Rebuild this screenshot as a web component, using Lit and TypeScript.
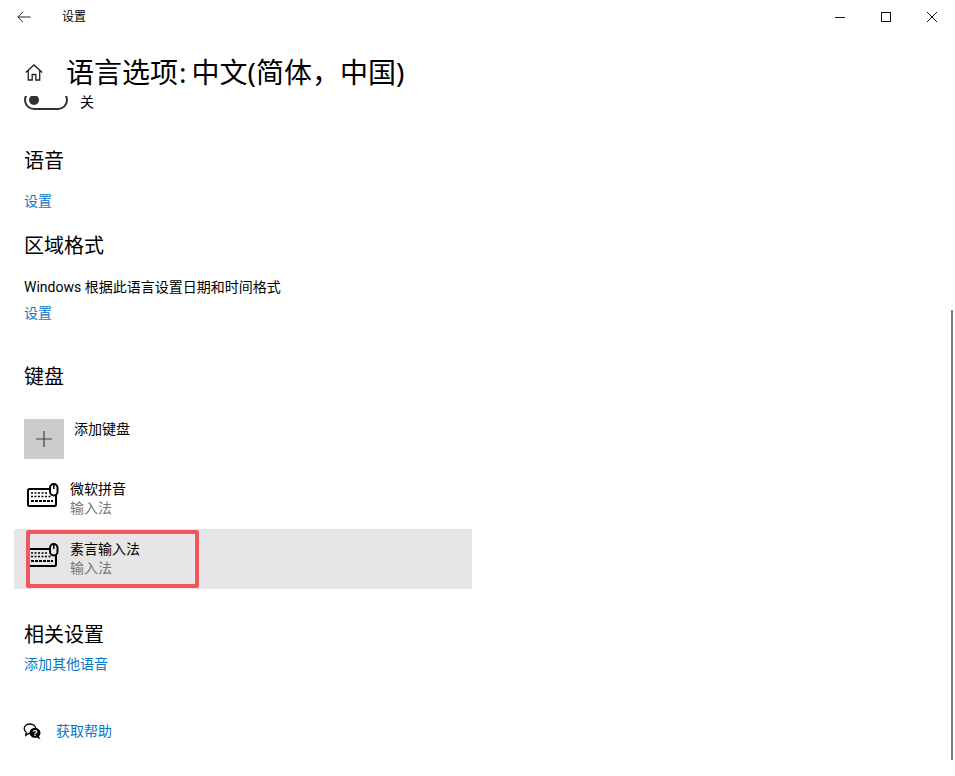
import { LitElement, html, css, svg } from "lit";
import { customElement } from "lit/decorators.js";

const keyboard = svg`<svg class="kbd" width="33" height="26" viewBox="0 0 33 26" fill="none" stroke="#000">
  <path d="M24 7H3.500A1.500 1.500 0 0 0 2 8.500v14A1.500 1.500 0 0 0 3.500 24h25a1.500 1.500 0 0 0 1.500-1.500V13" stroke-width="2"/>
  <rect x="24" y="2" width="7.500" height="11.500" rx="3.700" stroke-width="2"/>
  <path d="M27.800 3v4" stroke-width="1.500"/>
  <path d="M5 11h17M5 14.500h21" stroke-width="1.500" stroke-dasharray="2 1.500"/>
  <path d="M5 19h22" stroke-width="2" stroke-dasharray="3 1"/>
</svg>`;

@customElement("app-root")
export class AppRoot extends LitElement {
  static styles = css`
    :host {
      display: block;
      position: relative;
      width: 955px;
      height: 776px;
      overflow: hidden;
      background: #fff;
      color: #000;
      font-family: "Noto Sans", "Noto Sans CJK SC", sans-serif;
      font-size: 14px;
      line-height: 20px;
    }
    .titlebar { display: flex; align-items: center; height: 33px; }
    .back { display: flex; justify-content: center; width: 48px; }
    .apptitle { margin-left: 14px; font-size: 12px; }
    .winbtns { display: flex; margin-left: auto; }
    .winbtn { display: flex; justify-content: center; align-items: center; width: 46px; height: 33px; }
    .header { box-sizing: border-box; display: flex; align-items: center; height: 63px; padding: 15px 0 0 25px; gap: 23px; }
    .header h1 { margin: 0; font-size: 28px; font-weight: 400; line-height: 40px; white-space: nowrap; }
    .colon { margin: 0 5px 0 1px; }
    .toggle-row { display: flex; height: 14px; padding-left: 24px; gap: 12px; }
    .toggle-wrap { flex: none; display: flex; align-items: flex-end; height: 14px; width: 44px; overflow: hidden; }
    .toggle { flex: none; box-sizing: border-box; width: 44px; height: 20px; border: 2px solid #333; border-radius: 10px; padding: 3px; display: flex; }
    .knob { width: 10px; height: 10px; border-radius: 50%; background: #333; }
    .toggle-label { line-height: 12px; }
    .section { padding-left: 24px; }
    h2 { margin: 0; font-size: 20px; font-weight: 400; line-height: 28px; }
    a { display: block; color: #0a78c8; text-decoration: none; line-height: 20px; }
    .voice { margin-top: 37px; }
    .voice a { margin-top: 16px; }
    .region { margin-top: 21px; }
    .region p { margin: 17px 0 0; line-height: 20px; font-family: Roboto, "Noto Sans CJK SC", sans-serif; }
    .region a { margin-top: 6px; }
    .keys { margin-top: 40px; }
    .add { display: flex; margin-top: 28px; padding-left: 24px; }
    .tile { display: flex; justify-content: center; align-items: center; width: 40px; height: 40px; background: #ccc; }
    .add span { margin-left: 10px; line-height: 20px; }
    .ime { display: flex; box-sizing: border-box; width: 458px; height: 60px; margin-left: 14px; padding: 10px 0 0 12px; }
    .ime.first { margin-top: 10px; }
    .ime.sel { background: #e6e6e6; }
    .kbd { margin-top: 3px; flex: none; }
    .ime .txt { margin-left: 11px; }
    .ime .name { line-height: 19px; }
    .ime .sub { line-height: 20px; color: #767676; }
    .related { margin-top: 32px; }
    .related a { margin-top: 5px; }
    .help { display: flex; align-items: center; margin-top: 47px; padding-left: 23px; gap: 14px; }
    .mark {
      position: absolute; left: 26px; top: 530px; width: 173px; height: 58px;
      box-sizing: border-box; border: 4px solid #f0575c; border-radius: 2px;
    }
    .scroll { position: absolute; left: 951px; top: 310px; width: 2px; height: 450px; background: #7a7a7a; }
  `;

  render() {
    return html`
      <div class="titlebar">
        <div class="back">
          <svg width="14" height="12" viewBox="0 0 14 12" fill="none" stroke="#222" stroke-width="1"><path d="M13.500 6H1M6 .8 .8 6 6 11.200"/></svg>
        </div>
        <div class="apptitle">设置</div>
        <div class="winbtns">
          <div class="winbtn"><svg width="10" height="10" viewBox="0 0 10 10" stroke="#111"><path d="M0 5.500h10"/></svg></div>
          <div class="winbtn"><svg width="10" height="10" viewBox="0 0 10 10" fill="none" stroke="#111"><rect x=".5" y=".5" width="9" height="9"/></svg></div>
          <div class="winbtn"><svg width="10" height="10" viewBox="0 0 10 10" stroke="#111"><path d="M0 0l10 10M10 0 0 10"/></svg></div>
        </div>
      </div>
      <div class="header">
        <svg width="18" height="17" viewBox="0 0 18 17" fill="none" stroke="#222" stroke-width="1.300"><path d="M.8 8.600 9 1l8.200 7.600M3.300 6.500V16h3.900v-5.500h3.600V16h3.900V6.500"/></svg>
        <h1>语言选项<span class="colon">:</span>中文(简体，中国)</h1>
      </div>
      <div class="toggle-row">
        <div class="toggle-wrap"><div class="toggle"><div class="knob"></div></div></div>
        <span class="toggle-label">关</span>
      </div>
      <div class="section voice"><h2>语音</h2><a>设置</a></div>
      <div class="section region">
        <h2>区域格式</h2>
        <p>Windows 根据此语言设置日期和时间格式</p>
        <a>设置</a>
      </div>
      <div class="section keys"><h2>键盘</h2></div>
      <div class="add">
        <div class="tile"><svg width="16" height="16" viewBox="0 0 16 16" stroke="#444" stroke-width="1.200"><path d="M8 0v16M0 8h16"/></svg></div>
        <span>添加键盘</span>
      </div>
      <div class="ime first">${keyboard}<div class="txt"><div class="name">微软拼音</div><div class="sub">输入法</div></div></div>
      <div class="ime sel">${keyboard}<div class="txt"><div class="name">素言输入法</div><div class="sub">输入法</div></div></div>
      <div class="section related"><h2>相关设置</h2><a>添加其他语音</a></div>
      <div class="help">
        <svg width="19" height="17" viewBox="0 0 19 17">
          <path d="M7 1c3.200 0 5.700 2 5.700 4.800s-2.500 4.800-5.700 4.800c-.6 0-1.100 0-1.600-.2L2.800 12.300l.4-3A4.600 4.600 0 0 1 1.200 5.800C1.200 3 3.800 1 7 1z" fill="#fff" stroke="#000" stroke-width="1.300"/>
          <path d="M12 5c3 0 5.500 2.100 5.500 4.800 0 1.400-.6 2.600-1.600 3.500l1.600 3.200-3.600-2a6.500 6.500 0 0 1-1.900.3c-3 0-5.400-2.100-5.400-5S9 5 12 5z" fill="#000"/>
          <text x="12" y="13" font-size="8.500" font-weight="700" text-anchor="middle" fill="#fff" font-family="Liberation Sans">?</text>
        </svg>
        <a>获取帮助</a>
      </div>
      <div class="mark"></div>
      <div class="scroll"></div>
    `;
  }
}
